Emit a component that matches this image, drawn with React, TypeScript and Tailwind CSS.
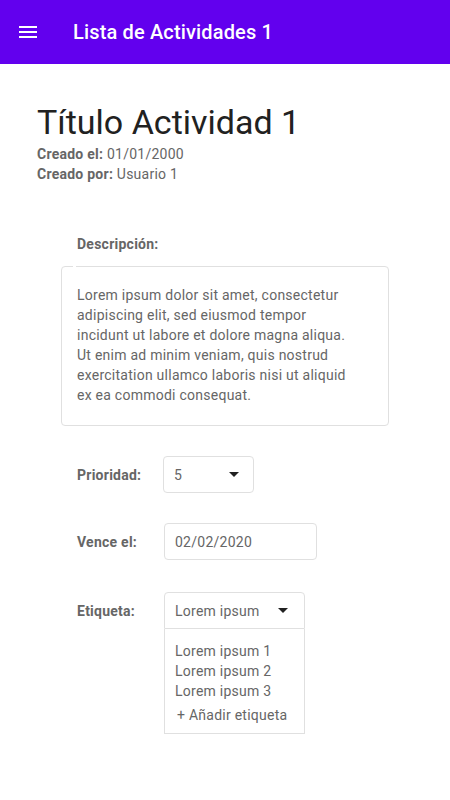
const ArrowDrop = () => (
  <svg width="10" height="5" viewBox="0 0 10 5" className="shrink-0">
    <path d="M0 0l5 5 5-5z" fill="#212121" />
  </svg>
);

export default function App() {
  const lineas = [
    "Lorem ipsum dolor sit amet, consectetur",
    "adipiscing elit, sed eiusmod tempor",
    "incidunt ut labore et dolore magna aliqua.",
    "Ut enim ad minim veniam, quis nostrud",
    "exercitation ullamco laboris nisi ut aliquid",
    "ex ea commodi consequat.",
  ];

  return (
    <div className="min-h-[800px] bg-white font-['Roboto',sans-serif]">
      {/* Barra superior */}
      <header className="flex h-16 items-center bg-[#6200ee] px-4 text-white">
        <svg width="24" height="24" viewBox="0 0 24 24" fill="white">
          <path d="M3 18h18v-2H3v2zm0-5h18v-2H3v2zm0-7v2h18V6H3z" />
        </svg>
        <h1 className="ml-[33px] text-[20px] font-medium leading-7 tracking-[0.15px]">Lista de Actividades 1</h1>
      </header>

      <main className="px-[37px] pt-[38px]">
        <h2 className="text-[34px] leading-[40px] text-[#212121]">Título Actividad 1</h2>
        <div className="mt-[2px] text-sm leading-5 tracking-[0.25px] text-[#666666]">
          <div>
            <span className="font-bold">Creado el:</span> 01/01/2000
          </div>
          <div>
            <span className="font-bold">Creado por:</span> Usuario 1
          </div>
        </div>

        {/* Descripción */}
        <div className="mt-[50px] ml-[40px] text-sm font-bold leading-5 tracking-[0.25px] text-[#666666]">Descripción:</div>
        <div className="relative mt-3 ml-[24px] w-[328px] rounded border border-[#e0e0e0] px-[15px] pt-[18px] pb-[20px] text-sm leading-5 tracking-[0.25px] text-[#666666]">
          <span className="absolute -top-px left-[11px] h-px w-[3px] bg-white" />
          {lineas.map((l, i) => (
            <div key={i} className="whitespace-nowrap">{l}</div>
          ))}
        </div>

        {/* Campos */}
        <div className="ml-[40px] text-sm leading-5 tracking-[0.25px] text-[#666666]">
          <div className="mt-[30px] flex items-center">
            <div className="w-[86px] font-bold">Prioridad:</div>
            <div className="flex h-[37px] w-[91px] items-center justify-between rounded border border-[#e0e0e0] pl-[10px] pr-[14px]">
              <span>5</span>
              <ArrowDrop />
            </div>
          </div>

          <div className="mt-[30px] flex items-center">
            <div className="w-[87px] font-bold">Vence el:</div>
            <div className="flex h-[37px] w-[153px] items-center rounded border border-[#e0e0e0] pl-[10px]">
              02/02/2020
            </div>
          </div>

          <div className="mt-[32px] flex items-start">
            <div className="flex h-[37px] w-[87px] items-center font-bold">Etiqueta:</div>
            <div className="w-[141px]">
              <div className="flex h-[37px] items-center justify-between rounded-t border border-[#e0e0e0] pl-[10px] pr-[16px]">
                <span>Lorem ipsum</span>
                <ArrowDrop />
              </div>
              <div className="border-x border-b border-[#e0e0e0] pl-[10px] pt-[12px] pb-2">
                <div>Lorem ipsum 1</div>
                <div>Lorem ipsum 2</div>
                <div>Lorem ipsum 3</div>
                <div className="mt-1 pl-[2px]">+ Añadir etiqueta</div>
              </div>
            </div>
          </div>
        </div>
      </main>
    </div>
  );
}
